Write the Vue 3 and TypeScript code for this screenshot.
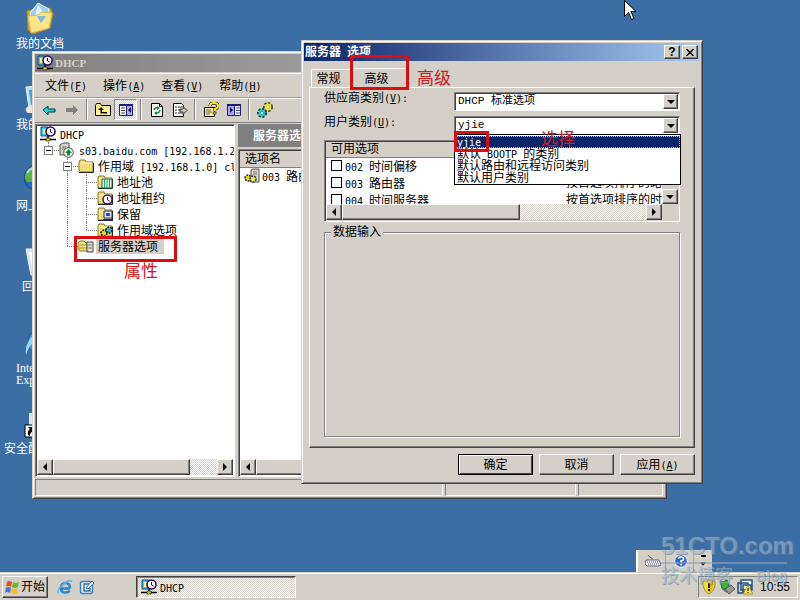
<script setup lang="ts">
import { h, ref } from 'vue'

/* Splits a label into full-width and half-width runs; "&" marks the access key. */
const Txt = (props: { t: string }) =>
  h(
    'span',
    { class: 'txt' },
    props.t.split(/([\x20-\x7e]+)/).filter(Boolean).map((part) => {
      if (!/^[\x20-\x7e]/.test(part)) return part
      const [head, tail] = part.split('&')
      return h('span', { class: 'hw' }, tail ? [head, h('u', tail[0]), tail.slice(1)] : part)
    }),
  )
Txt.props = ['t']

const shortcuts = [
  { icon: 'docs', label: '我的文档' },
  { icon: 'computer', label: '我的电脑' },
  { icon: 'globe', label: '网上邻居' },
  { icon: 'bin', label: '回收站' },
  { icon: 'ie', label: 'Internet Explorer' },
  { icon: 'shortcut', label: '安全配置向导' },
]
const menus = ['文件(&F)', '操作(&A)', '查看(&V)', '帮助(&H)']
const tools = [
  ['back', 'forward'],
  ['up', 'pane'],
  ['refresh', 'export'],
  ['help', 'pane2'],
  ['gears'],
]
const toolNames: Record<string, string> = {
  back: '后退', forward: '前进', up: '上移一级', pane: '显示树', refresh: '刷新',
  export: '导出', help: '帮助', pane2: '显示操作', gears: '配置选项',
}
/* Guide cells: v line, t branch, l last branch, x expander, e expander as last branch, blank */
const tree = [
  { guides: '', icon: 'dhcp', label: 'DHCP' },
  { guides: 'e', icon: 'server', label: 's03.baidu.com [192.168.1.2' },
  { guides: ' x', icon: 'folder', label: '作用域 [192.168.1.0] cl' },
  { guides: ' vt', icon: 'pool', label: '地址池' },
  { guides: ' vt', icon: 'lease', label: '地址租约' },
  { guides: ' vt', icon: 'reserve', label: '保留' },
  { guides: ' vl', icon: 'scopeopt', label: '作用域选项' },
  { guides: ' l', icon: 'srvopt', label: '服务器选项', selected: true },
]
const guideClass: Record<string, string> = { v: 'g-v', t: 'g-v g-h', l: 'g-l g-h', x: 'g-v g-h g-x', e: 'g-l g-h g-x', ' ': '' }
const options = ref([
  { name: '002 时间偏移', desc: '', on: false },
  { name: '003 路由器', desc: '按首选项排序的路', on: false },
  { name: '004 时间服务器', desc: '按首选项排序的时', on: false },
])
const classes = ['yjie', '默认 BOOTP 的类别', '默认路由和远程访问类别', '默认用户类别']
const vendor = ref('DHCP 标准选项')
const user = ref('yjie')
</script>

<template>
  <main class="desktop">
    <svg class="defs" aria-hidden="true">
      <symbol id="docs" viewBox="0 0 32 32">
        <path d="M3 9l8-2 3 2 12-3 3 6-3 14-17 6-5-4z" fill="#d9a62a" stroke="#b88820" />
        <path d="M14 1l11 6-2 15-13 3-4-14z" fill="#9fd0f6" stroke="#e9f5ff" />
        <path d="M14 3l6 8-9 3z" fill="#fff" opacity=".7" />
        <path d="M4 14l10-1 4-3 10 1-3 15-18 5z" fill="#fbe588" stroke="#e0bb45" />
        <path d="M13 14h9l-5 7z" fill="#7db8e8" />
      </symbol>
      <symbol id="computer" viewBox="0 0 32 32">
        <path d="M2 4l24-2v20l-21 3z" fill="#b7def8" stroke="#eaf6ff" />
        <path d="M5 7l18-2v14l-16 3z" fill="#4d9ddd" />
        <path d="M2 25q5-5 9 0l12-1v6H4q-3-2-2-5" fill="#e6e6e6" />
      </symbol>
      <symbol id="globe" viewBox="0 0 32 32">
        <circle cx="12" cy="14" r="12" fill="#2268c7" stroke="#17458c" />
        <path d="M2 9q6-7 14-6l-4 6-3 9-6 0q-4-5-1-9" fill="#58b53d" />
        <path d="M3 9q3-5 7-5" stroke="#fff" stroke-width="2" fill="none" opacity=".7" />
      </symbol>
      <symbol id="bin" viewBox="0 0 32 32">
        <path d="M2 4h27l-5 26H7z" fill="#cfe6f5" stroke="#f4fbff" />
        <path d="M5 7h5l2 20h-3z" fill="#fff" />
      </symbol>
      <symbol id="ie" viewBox="0 0 32 32">
        <path d="M16 4a12 12 0 1 0 11 17h-7q-4 4-8 0-2-2-2-3h18Q29 5 16 4m-6 10q2-5 6-5t5 5z" fill="#2e9be6" stroke="#0f5fae" />
        <path d="M2 29Q0 16 12 7t18-3Q20 5 12 13T2 29" fill="#9bd8ff" />
      </symbol>
      <symbol id="shortcut" viewBox="0 0 32 32">
        <path d="M5 6h20v18H5z" fill="#dce8f0" />
        <path d="M1 18h12v12H1z" fill="#fff" stroke="#000" />
        <path d="M4 28q-1-4 2-6l-2-2h7v7l-2-2q-3 0-3 4z" fill="#000" />
      </symbol>

      <symbol id="dhcp" viewBox="0 0 16 16">
        <path d="M1 1h7v9H1z" fill="#2cd6d6" stroke="#1a3a8c" />
        <path d="M3 3h3v5H3z" fill="#f4f28b" />
        <circle cx="10.500" cy="5.500" r="4.500" fill="#fff" stroke="#2a0c5c" stroke-width="1.600" />
        <path d="M10.500 3v3l2 1" stroke="#2a0c5c" fill="none" />
        <path d="M8 10v3M0 13.500h16" stroke="#000" stroke-width="1.400" />
        <path d="M6 12h4v3H6z" fill="#e8d020" stroke="#000" stroke-width=".6" />
      </symbol>
      <symbol id="server" viewBox="0 0 16 16">
        <path d="M1 3l3-2h6v12H1z" fill="#d8d4c8" stroke="#555" />
        <path d="M3 5h4M3 7h4" stroke="#777" />
        <circle cx="9.500" cy="10.500" r="4.800" fill="#fff" stroke="#444" />
        <path d="M9.500 7l3.500 4h-2v2.500h-3V11h-2z" fill="#128a34" />
      </symbol>
      <symbol id="folder" viewBox="0 0 16 16">
        <path d="M1 4l1-2h5l1 2h7v10H1z" fill="#f0df78" stroke="#8b7420" />
        <path d="M2 5h12" stroke="#fff8c8" />
        <path d="M1 14.500h14.500V5" stroke="#222" fill="none" />
      </symbol>
      <symbol id="pool" viewBox="0 0 16 16">
        <use href="#folder" />
        <path d="M5 5h10v9H5z" fill="#d8ffe8" stroke="#126a3a" />
        <path d="M7.500 5v9M10 5v9M12.500 5v9" stroke="#2c9a62" />
      </symbol>
      <symbol id="lease" viewBox="0 0 16 16">
        <use href="#folder" />
        <circle cx="10.500" cy="9.500" r="4.500" fill="#fff" stroke="#3d145f" stroke-width="1.500" />
        <path d="M10.500 7v3l2 1" stroke="#3d145f" fill="none" />
      </symbol>
      <symbol id="reserve" viewBox="0 0 16 16">
        <use href="#folder" />
        <path d="M7 5h8v7H7z" fill="#e4e4f4" stroke="#1a2870" />
        <path d="M9 7h4v3H9z" fill="#3048b8" />
        <path d="M6 14h10" stroke="#1a2870" stroke-width="2" />
      </symbol>
      <symbol id="scopeopt" viewBox="0 0 16 16">
        <use href="#folder" />
        <circle cx="7" cy="11" r="3" fill="#e4d030" stroke="#222" stroke-width="1.500" stroke-dasharray="2 1" />
        <circle cx="12" cy="8" r="3" fill="#36b8b8" stroke="#222" stroke-width="1.500" stroke-dasharray="2 1" />
      </symbol>
      <symbol id="srvopt" viewBox="0 0 16 16">
        <path d="M0 5l2-2h4l2 2h2v8H2l-2-3z" fill="#f0df78" stroke="#8b7420" />
        <path d="M1 7h8M1 10h8" stroke="#b49b38" />
        <path d="M9 4h6v10H9z" fill="#e4e0d4" stroke="#444" />
        <path d="M10 7h4M10 10h4" stroke="#777" />
      </symbol>
      <symbol id="optitem" viewBox="0 0 16 16">
        <path d="M7 2l2-1h6v13H7z" fill="#d8d4c8" stroke="#555" />
        <path d="M9 4h4M9 6h4" stroke="#777" />
        <circle cx="4" cy="10" r="3" fill="#e9d62c" stroke="#333" stroke-width="1.500" stroke-dasharray="2 1" />
        <circle cx="9" cy="11" r="3" fill="#f4e850" stroke="#333" stroke-width="1.500" stroke-dasharray="2 1" />
      </symbol>

      <symbol id="back" viewBox="0 0 16 16"><path d="M2 8l5-4v3h7v3H7v3z" fill="#22d0d0" stroke="#003c3c" /></symbol>
      <symbol id="forward" viewBox="0 0 16 16"><path d="M14 8L9 3v3H2v4h7v3z" fill="#808080" /><path d="M14.500 8.500l-5 5" stroke="#fff" /></symbol>
      <symbol id="up" viewBox="0 0 16 16">
        <path d="M.5 3.500l1-2h4l1 2h9v10H.5z" fill="#fff58a" stroke="#000" />
        <path d="M6 5l-3 3h2.500v3.500H12V10H7V8h2z" fill="#000" />
      </symbol>
      <symbol id="pane" viewBox="0 0 16 16">
        <path d="M1.500 2.500h13v11h-13z" fill="#fff" stroke="#1c1c7c" /><path d="M1 3h14" stroke="#1c1c7c" stroke-width="2" />
        <path d="M8.500 4v9" stroke="#1c1c7c" /><path d="M3 6h4M3 8.500h4M3 11h4" stroke="#444" /><path d="M9 4h5v9H9z" fill="#a8a8e4" /><path d="M13 5v6l-3-3z" fill="#10106c" />
      </symbol>
      <symbol id="pane2" viewBox="0 0 16 16">
        <path d="M1.500 2.500h13v11h-13z" fill="#fff" stroke="#1c1c7c" /><path d="M1 3h14" stroke="#1c1c7c" stroke-width="2" />
        <path d="M8.500 4v9" stroke="#1c1c7c" /><path d="M10 6h4M10 8.500h4M10 11h4" stroke="#3344bb" /><path d="M2 4h6v9H2z" fill="#a8a8e4" /><path d="M4 5v6l3-3z" fill="#10106c" />
      </symbol>
      <symbol id="refresh" viewBox="0 0 16 16">
        <path d="M2.500 1.500h8l3 3v10h-11z" fill="#fff" stroke="#000" /><path d="M10.500 1.500v3h3" fill="none" stroke="#000" />
        <path d="M5 8q1-3 4-2M11 8q-1 4-4 2.500" fill="none" stroke="#128a34" stroke-width="1.500" /><path d="M8 4l3 2-3 2zM8 9v4l-3-2z" fill="#128a34" />
      </symbol>
      <symbol id="export" viewBox="0 0 16 16">
        <path d="M1.500 1.500h8l2 2v11h-10z" fill="#fff" stroke="#000" /><path d="M3 5h2M6 5h4M3 8h2M6 8h3M3 11h2M6 11h4" stroke="#333" />
        <path d="M8 7h3V4.500l4 4-4 4V10H8z" fill="#c8c4b8" stroke="#333" />
      </symbol>
      <symbol id="help" viewBox="0 0 16 16">
        <path d="M1.500 5.500h10v9h-10z" fill="#fff3a0" stroke="#000" /><path d="M3 8h5M3 10h6M3 12h4" stroke="#555" />
        <path d="M7 4q0-3 4-3t4 3q0 2-3 3v2" fill="none" stroke="#000" stroke-width="3" /><path d="M7 4q0-3 4-3t4 3q0 2-3 3v2" fill="none" stroke="#ffe92c" stroke-width="2" />
        <path d="M10 10h3v2h-3z" fill="#ffe92c" stroke="#000" stroke-width=".6" />
      </symbol>
      <symbol id="gears" viewBox="0 0 16 16">
        <circle cx="5" cy="11" r="3.500" fill="#28b8b8" stroke="#063838" stroke-width="3" stroke-dasharray="2 1.200" />
        <circle cx="5" cy="11" r="2.600" fill="none" stroke="#28c8c8" stroke-width="1.600" />
        <circle cx="11" cy="5" r="3.500" fill="#e6d430" stroke="#403a08" stroke-width="3" stroke-dasharray="2 1.200" />
        <circle cx="11" cy="5" r="2.600" fill="none" stroke="#f2e440" stroke-width="1.600" />
        <circle cx="5" cy="11" r="1" fill="#fff" /><circle cx="11" cy="5" r="1" fill="#fff" />
      </symbol>

      <symbol id="flag" viewBox="0 0 16 16">
        <path d="M3 3q2-2 5 0L7 8Q4 6 2 8z" fill="#e8502c" /><path d="M9 3q3 2 6 0l-1 5q-3 2-6 0z" fill="#6cb42c" />
        <path d="M2 9q2-2 5 0l-1 5q-3-2-5 0z" fill="#3c78dc" /><path d="M8 9q3 2 6 0l-1 5q-3 2-6 0z" fill="#f4c020" />
      </symbol>
      <symbol id="browser" viewBox="0 0 16 16">
        <path d="M13 9.500H5M13 9.500Q13 4 8.500 4T4 9t4.500 4.500q3 0 4-2" fill="none" stroke="#2c86d0" stroke-width="2.600" />
        <path d="M1.500 14.500Q-.5 11 6 5.500T15 2.500" fill="none" stroke="#58b4ee" stroke-width="1.400" />
      </symbol>
      <symbol id="showdesk" viewBox="0 0 16 16">
        <rect x="1.500" y="2.500" width="12" height="12" rx="2" fill="#dcecf8" stroke="#3c80b8" stroke-width="1.500" />
        <path d="M10 5H5v7h6V9" fill="none" stroke="#3574ac" stroke-width="1.400" /><path d="M7 9l6-7 2 2-6 6z" fill="#fff" stroke="#2b689e" />
      </symbol>
      <symbol id="shield" viewBox="0 0 16 16">
        <path d="M8 1q3 2 6 1 1 9-6 13Q1 11 2 2q3 1 6-1" fill="#f8dc30" stroke="#a58a38" /><path d="M8 2q3 2 5 1 0 7-5 11z" fill="#e4b818" />
        <path d="M7 4h2v5H7zM7 10h2v2H7z" fill="#222" />
      </symbol>
      <symbol id="plug" viewBox="0 0 16 16">
        <path d="M6 10l6-4 4 4-6 5z" fill="#999" stroke="#555" /><path d="M1 2l3 1 4-2 2 5-3 4-4-1z" fill="#38b838" stroke="#187818" /><path d="M3 9l5 4" stroke="#666" stroke-width="2" />
      </symbol>
      <symbol id="vm" viewBox="0 0 16 16">
        <path d="M4 1h11v10H4z" fill="#fff" stroke="#205080" stroke-width="1.500" /><path d="M1 4h10v10H1zM6 6h8v7H6z" fill="none" stroke="#205080" stroke-width="1.500" />
        <path d="M11 6l5 9H6z" fill="#ffe830" stroke="#a08000" stroke-width=".7" /><path d="M10.500 9h1v3h-1zM10.500 13h1v1h-1z" fill="#000" />
      </symbol>
      <symbol id="keyboard" viewBox="0 0 16 16">
        <path d="M1 7h13l2 5-2 1H2l-2-2z" fill="#f0f0fa" stroke="#667" /><path d="M2 9h12M3 11h11" stroke="#446" stroke-dasharray="1 1" /><path d="M8 6q-4-2-5-4" stroke="#555" fill="none" />
      </symbol>
      <symbol id="qmark" viewBox="0 0 16 16">
        <circle cx="8" cy="8" r="6.500" fill="#2c68cc" stroke="#dbe6f8" stroke-width="1.400" />
        <path d="M5.500 6q0-2 2.500-2t2.500 2q0 1.500-2.500 2v1.500M8 11v1.500" fill="none" stroke="#fff" stroke-width="1.600" />
      </symbol>
      <symbol id="tri-l" viewBox="0 0 8 8"><path d="M6 0v8L2 4z" /></symbol>
      <symbol id="tri-r" viewBox="0 0 8 8"><path d="M2 0v8l4-4z" /></symbol>
      <symbol id="tri-d" viewBox="0 0 8 8"><path d="M0 2h8L4 6z" /></symbol>
    </svg>

    <nav class="shortcuts">
      <a v-for="s in shortcuts" :key="s.icon" href="#">
        <svg><use :href="'#' + s.icon" /></svg>
        <span>{{ s.label }}</span>
      </a>
    </nav>

    <section class="window console">
      <header class="titlebar inactive">
        <svg class="i16"><use href="#dhcp" /></svg>
        <h1>DHCP</h1>
      </header>
      <nav class="menubar">
        <button v-for="m in menus" :key="m" type="button"><Txt :t="m" /></button>
      </nav>
      <div class="toolbar">
        <div v-for="(group, i) in tools" :key="i" class="group">
          <button v-for="t in group" :key="t" type="button" :class="{ pressed: t === 'pane' }" :aria-label="toolNames[t]">
            <svg class="i16"><use :href="'#' + t" /></svg>
          </button>
        </div>
      </div>
      <div class="panes">
        <div class="pane">
          <ul class="tree">
            <li v-for="n in tree" :key="n.label">
              <i v-for="(g, i) in n.guides" :key="i" class="guide" :class="guideClass[g]"><b v-if="'xe'.includes(g)"></b></i>
              <svg class="i16"><use :href="'#' + n.icon" /></svg>
              <span class="node" :class="{ selected: n.selected }"><Txt :t="n.label" /></span>
            </li>
          </ul>
          <div class="scroll">
            <button type="button" aria-label="向左"><svg><use href="#tri-l" /></svg></button>
            <span class="thumb"></span><span class="track"></span>
            <button type="button" aria-label="向右"><svg><use href="#tri-r" /></svg></button>
          </div>
        </div>
        <div class="detail">
          <h2 class="banner">服务器选项</h2>
          <div class="pane">
            <div class="colhead">选项名</div>
            <div class="item"><svg class="i16"><use href="#optitem" /></svg><Txt t="003 路由器" /></div>
            <div class="grow"></div>
            <div class="scroll">
              <button type="button" aria-label="向左"><svg><use href="#tri-l" /></svg></button>
              <span class="thumb wide"></span>
            </div>
          </div>
        </div>
      </div>
      <footer class="status"><span></span><span></span><span></span></footer>
    </section>

    <section class="window dialog" role="dialog">
      <header class="titlebar">
        <h1><Txt t="服务器 选项" /></h1>
        <button class="cap" type="button" aria-label="帮助">?</button>
        <button class="cap" type="button" aria-label="关闭">
          <svg viewBox="0 0 8 8"><path d="M0 0l8 8M8 0L0 8" stroke="#000" stroke-width="1.600" /></svg>
        </button>
      </header>
      <div class="tabs" role="tablist">
        <button type="button" role="tab">常规</button>
        <button type="button" role="tab" class="current" aria-selected="true">高级</button>
      </div>
      <div class="sheet">
        <div class="field">
          <label for="vendor"><Txt t="供应商类别(&V):" /></label>
          <div class="combo">
            <select id="vendor" v-model="vendor"><option>DHCP 标准选项</option></select>
            <span class="drop"><svg><use href="#tri-d" /></svg></span>
          </div>
        </div>
        <div class="field">
          <label for="user"><Txt t="用户类别(&U):" /></label>
          <div class="combo">
            <select id="user" v-model="user"><option v-for="c in classes" :key="c">{{ c }}</option></select>
            <span class="drop"><svg><use href="#tri-d" /></svg></span>
            <ul class="popup">
              <li v-for="c in classes" :key="c" :class="{ active: c === user }" @click="user = c"><Txt :t="c" /></li>
            </ul>
          </div>
        </div>
        <div class="options">
          <div class="viewport">
            <table>
              <thead><tr><th>可用选项</th><th></th></tr></thead>
              <tbody>
                <tr v-for="o in options" :key="o.name">
                  <td><label><input v-model="o.on" type="checkbox" /><Txt :t="o.name" /></label></td>
                  <td>{{ o.desc }}</td>
                </tr>
              </tbody>
            </table>
            <div class="vscroll"><button type="button" aria-label="向下"><svg><use href="#tri-d" /></svg></button></div>
          </div>
          <div class="scroll">
            <button type="button" aria-label="向左"><svg><use href="#tri-l" /></svg></button>
            <span class="thumb"></span><span class="track"></span>
            <button type="button" aria-label="向右"><svg><use href="#tri-r" /></svg></button>
            <span class="corner"></span>
          </div>
        </div>
        <fieldset><legend>数据输入</legend></fieldset>
      </div>
      <footer class="actions">
        <button type="button" class="default">确定</button>
        <button type="button">取消</button>
        <button type="button"><Txt t="应用(&A)" /></button>
      </footer>
    </section>

    <div class="mark box-tab"></div>
    <div class="mark box-item"></div>
    <div class="mark box-node"></div>
    <p class="note note-tab">高级</p>
    <p class="note note-item">选择</p>
    <p class="note note-node">属性</p>

    <div class="langbar">
      <button type="button" aria-label="键盘"><svg class="i16"><use href="#keyboard" /></svg></button>
      <button type="button" aria-label="语言帮助"><svg class="i16"><use href="#qmark" /></svg></button>
      <span class="langend"><i></i><svg><use href="#tri-d" /></svg></span>
    </div>

    <footer class="taskbar">
      <button type="button" class="start"><svg class="i16"><use href="#flag" /></svg>开始</button>
      <div class="quick">
        <a href="#" aria-label="浏览器"><svg class="i16"><use href="#browser" /></svg></a>
        <a href="#" aria-label="显示桌面"><svg class="i16"><use href="#showdesk" /></svg></a>
      </div>
      <button type="button" class="task"><svg class="i16"><use href="#dhcp" /></svg><Txt t="DHCP" /></button>
      <div class="tray">
        <svg class="i16"><use href="#shield" /></svg>
        <svg class="i16"><use href="#plug" /></svg>
        <svg class="i16"><use href="#vm" /></svg>
        <time>10:55</time>
      </div>
    </footer>

    <div class="watermark"><strong>51CTO.com</strong><div><span>技术博客</span><span class="blog">Blog</span></div></div>
    <svg class="cursor" viewBox="0 0 12 21"><path d="M.5.5v16l4-4 3 7 2.500-1-3-7h5z" fill="#fff" stroke="#000" /></svg>
  </main>
</template>

<style>
body { margin: 0; }
.txt { display: inline-block; padding-top: 2px; line-height: 14px; white-space: pre; }
.txt .hw { font-family: "DejaVu Sans Mono", monospace; font-size: 10px; line-height: 12px; }
</style>

<style scoped>
* { box-sizing: border-box; }
.desktop {
  position: relative; height: 100vh; overflow: hidden; background: #3a6ea5; color: #000;
  font: 12px/16px "Liberation Sans", "Noto Sans CJK SC", sans-serif;
}
.defs { position: absolute; width: 0; height: 0; }
button, select { font: inherit; color: inherit; border: 0; padding: 0; margin: 0; background: #d4d0c8; }
h1, h2, p, ul { margin: 0; padding: 0; font-size: 12px; list-style: none; }
.i16 { width: 16px; height: 16px; flex: none; }

.shortcuts { width: 80px; display: flex; flex-direction: column; }
.shortcuts a {
  height: 81px; padding-top: 2px; display: flex; flex-direction: column; align-items: center; gap: 4px;
  color: #fff; text-decoration: none; text-align: center; line-height: 12px; white-space: nowrap;
}
.shortcuts a svg { width: 32px; height: 32px; flex: none; }
.shortcuts a:nth-child(5) { line-height: 12px; }
.shortcuts a:nth-child(5) span { white-space: normal; font-family: "Liberation Serif", serif; width: 52px; text-align: left; padding-left: 2px; }

.window {
  position: absolute; background: #d4d0c8; display: flex; flex-direction: column; padding: 2px;
  border: 1px solid; border-color: #d4d0c8 #404040 #404040 #d4d0c8;
  box-shadow: inset 1px 1px #fff, inset -1px -1px #808080;
}
.titlebar {
  height: 18px; flex: none; display: flex; align-items: center; gap: 2px; padding: 0 2px; color: #fff;
  background: linear-gradient(90deg, #0a246a, #a6caf0);
}
.titlebar h1 { flex: 1; font-weight: 700; line-height: 18px; }
.titlebar.inactive { background: linear-gradient(90deg, #808080, #c0c0c0); color: #d4d0c8; }
.inactive h1 { font-family: "Liberation Serif", serif; font-size: 11px; }

.console { left: 32px; top: 51px; width: 635px; height: 448px; }
.menubar { height: 25px; flex: none; margin-top: 1px; border-top: 1px solid #fff; border-bottom: 1px solid #a09c94; display: flex; padding-left: 2px; }
.menubar button { padding: 0 8px; }
.toolbar { height: 25px; flex: none; display: flex; align-items: center; border-top: 1px solid #fff; border-bottom: 1px solid #808080; padding: 0 0 2px 2px; }
.group { display: flex; }
.group + .group { padding-left: 8px; background: linear-gradient(90deg, transparent 3px, #808080 3px 4px, #fff 4px 5px, transparent 5px); }
.toolbar button { width: 23px; height: 21px; display: grid; place-items: center; background: none; }
.toolbar .pressed {
  border: 1px solid; border-color: #808080 #fff #fff #808080;
  background: repeating-conic-gradient(#fff 0 25%, #d4d0c8 0 50%) 0 0 / 2px 2px;
}
.panes { flex: 1; min-height: 0; display: grid; grid-template-columns: 200px 1fr; gap: 3px; padding-top: 1px; }
.pane {
  background: #fff; display: flex; flex-direction: column; min-width: 0; overflow: hidden;
  border: 1px solid; border-color: #808080 #fff #fff #808080; box-shadow: inset 1px 1px #404040; padding: 1px;
}
.tree { flex: 1; padding-left: 3px; }
.tree li { height: 16px; display: flex; align-items: center; }
.guide { position: relative; width: 19px; height: 16px; flex: none; }
.g-v::before, .g-l::before { content: ""; position: absolute; left: 8px; top: 0; bottom: 0; border-left: 1px dotted #808080; }
.g-l::before { bottom: 8px; }
.g-h::after { content: ""; position: absolute; left: 8px; right: 0; top: 8px; border-top: 1px dotted #808080; }
.guide b { position: absolute; z-index: 1; left: 4px; top: 4px; width: 9px; height: 9px; border: 1px solid #808080; background: linear-gradient(#000, #000) center / 5px 1px no-repeat #fff; }
.node { margin-left: 2px; padding: 0 6px 0 2px; height: 16px; white-space: nowrap; }
.selected { background: #d4d0c8; }

.scroll { height: 16px; flex: none; display: flex; background: #d4d0c8; }
.scroll button, .scroll .thumb, .vscroll button, .drop, .cap {
  background: #d4d0c8; border: 1px solid; border-color: #fff #404040 #404040 #fff; box-shadow: inset -1px -1px #808080;
}
.scroll button { width: 16px; display: grid; place-items: center; flex: none; }
.scroll svg, .drop svg, .vscroll svg { width: 8px; height: 8px; }
.thumb { flex: 138; }
.track { flex: 27; background: repeating-conic-gradient(#fff 0 25%, #d4d0c8 0 50%) 0 0 / 2px 2px; }
.detail { display: flex; flex-direction: column; min-width: 0; }
.banner { background: #808080; color: #fff; height: 23px; line-height: 24px; padding-left: 15px; margin-bottom: 2px; flex: none; }
.detail .pane { flex: 1; }
.colhead { background: #d4d0c8; padding-left: 5px; line-height: 16px; border-bottom: 1px solid #808080; flex: none; }
.item { display: flex; align-items: center; gap: 2px; padding: 0 4px; }
.grow { flex: 1; }
.status { height: 19px; flex: none; display: grid; grid-template-columns: 410fr 132fr 85fr; gap: 2px; padding: 2px 1px 0 0; }
.status span { border: 1px solid; border-color: #808080 #fff #fff #808080; }

.dialog { left: 301px; top: 40px; width: 402px; height: 444px; }
.dialog .titlebar { padding: 0 2px 0 1px; }
.cap { width: 16px; height: 14px; color: #000; font-weight: 700; line-height: 12px; display: grid; place-items: center; }
.cap svg { width: 8px; height: 7px; }
.tabs { height: 26px; flex: none; display: flex; align-items: flex-end; padding-left: 7px; }
.tabs button { width: 41px; height: 18px; border: 1px solid; border-color: #fff #404040 transparent #fff; border-bottom: 0; border-radius: 2px 2px 0 0; padding-right: 6px; }
.tabs .current { width: 55px; height: 20px; margin-bottom: -1px; position: relative; }
.sheet {
  flex: 1; margin: 0 5px 6px 5px; padding: 4px 14px 10px; display: flex; flex-direction: column;
  border: 1px solid; border-color: #fff #404040 #404040 #fff; box-shadow: inset -1px -1px #808080;
}
.field { display: grid; grid-template-columns: 130px 1fr; height: 24px; }
.field label { line-height: 12px; }
.field label .txt { padding-top: 0; line-height: 12px; }
.combo { position: relative; height: 19px; display: flex; background: #fff; border: 1px solid; border-color: #808080 #fff #fff #808080; box-shadow: inset 1px 1px #404040; padding: 1px; }
.combo select { flex: 1; min-width: 0; appearance: none; background: #fff; padding-left: 2px; font: 11px/15px "Liberation Mono", "Noto Sans CJK SC", monospace; outline: 0; }
.drop { width: 15px; display: grid; place-items: center; }
.popup { position: absolute; z-index: 2; left: -1px; right: -2px; top: 17px; border: 1px solid #000; background: #fff; padding: 1px 0 0; }
.popup li { height: 12px; line-height: 12px; padding: 0 2px; white-space: nowrap; }
.popup .txt { padding-top: 0; line-height: 12px; }
.popup .active { background: #0a246a; color: #fff; outline: 1px dotted #c8b878; outline-offset: -1px; }
.options { border: 1px solid; border-color: #808080 #fff #fff #808080; box-shadow: inset 1px 1px #404040; padding: 1px; }
.viewport { height: 62px; overflow: hidden; display: flex; align-items: stretch; background: #fff; }
table { flex: 1; align-self: flex-start; border-collapse: collapse; table-layout: fixed; }
th { width: 241px; height: 15px; padding: 0 5px; text-align: left; font-weight: 400; line-height: 14px; background: #d4d0c8; border-bottom: 1px solid #808080; }
td { height: 17px; line-height: 16px; padding: 0 0 0 5px; white-space: nowrap; vertical-align: middle; }
td + td { padding-left: 2px; }
th + th { width: auto; }
td label { display: flex; align-items: center; gap: 3px; }
input[type="checkbox"] { appearance: none; width: 11px; height: 11px; margin: 0; border: 1px solid #000; background: #fff; }
.vscroll { width: 16px; flex: none; display: flex; align-items: flex-end; background: #d4d0c8; }
.vscroll button { width: 16px; height: 15px; display: grid; place-items: center; }
.options .thumb { flex: 178; }
.options .track { flex: 127; }
.corner { width: 16px; }
fieldset { flex: 1; margin: 2px 0 0; padding: 0; border: 1px solid #808080; box-shadow: 1px 1px #fff, inset 1px 1px #fff; min-width: 0; }
legend { margin-left: 6px; padding: 0 2px; background: #d4d0c8; }
.actions { display: flex; justify-content: flex-end; gap: 6px; padding: 0 5px 6px; }
.actions button { width: 75px; height: 21px; border: 1px solid; border-color: #fff #404040 #404040 #fff; box-shadow: inset -1px -1px #808080; }
.actions .default { border-color: #000; box-shadow: inset 1px 1px #fff, inset -1px -1px #404040; }

.mark { position: absolute; z-index: 3; border: 3px solid #dc0c10; pointer-events: none; }
.box-tab { left: 350px; top: 55px; width: 59px; height: 35px; }
.box-item { left: 454px; top: 131px; width: 35px; height: 21px; }
.box-node { left: 74px; top: 236px; width: 103px; height: 26px; }
.note { position: absolute; z-index: 3; color: #cc2020; font-size: 17px; line-height: 20px; pointer-events: none; }
.note-tab { left: 417px; top: 69px; }
.note-item { left: 541px; top: 130px; }
.note-node { left: 124px; top: 262px; }

.langbar { position: absolute; left: 636px; bottom: 28px; height: 22px; width: 76px; display: flex; background: #d4d0c8; border-left: 2px solid #fff; }
.langbar button { width: 28px; padding-left: 2px; display: grid; place-items: center; border-right: 1px solid #a8a49c; }
.langend { flex: 1; display: flex; flex-direction: column; align-items: center; justify-content: center; gap: 4px; }
.langend i { width: 5px; height: 2px; background: #000; }
.langend svg { width: 6px; height: 6px; }
.taskbar {
  position: absolute; left: 0; right: 0; bottom: 0; height: 28px; background: #d4d0c8; border-top: 1px solid #d4d0c8; box-shadow: inset 0 1px #fff;
  display: flex; align-items: center; padding: 3px 2px 2px;
}
.start { width: 46px; height: 22px; display: flex; align-items: center; gap: 1px; padding-left: 1px; border: 1px solid; border-color: #fff #404040 #404040 #fff; box-shadow: inset -1px -1px #808080; }
.quick { width: 88px; padding-left: 9px; display: flex; gap: 6px; }
.quick a { height: 16px; }
.task {
  width: 160px; height: 22px; display: flex; align-items: center; gap: 3px; padding-left: 4px;
  border: 1px solid; border-color: #404040 #fff #fff #404040; box-shadow: inset 1px 1px #808080;
  background: repeating-conic-gradient(#fff 0 25%, #d4d0c8 0 50%) 0 0 / 2px 2px;
}
.tray { margin-left: auto; width: 100px; height: 22px; display: flex; align-items: center; gap: 2px; padding: 0 2px; border: 1px solid; border-color: #808080 #fff #fff #808080; }
.tray time { padding-left: 5px; }
.watermark { position: absolute; left: 661px; top: 530px; width: 126px; color: #9fb4c8; opacity: .6; pointer-events: none; text-shadow: 1px 1px #6d8094; }
.watermark strong { display: block; font: 700 24px/32px "Liberation Sans", sans-serif; border-bottom: 2px solid #8fa6bc; }
.watermark div { display: flex; justify-content: space-between; align-items: center; font-size: 18px; line-height: 24px; }
.watermark .blog { font-size: 14px; font-weight: 700; line-height: 16px; }
.cursor { position: absolute; left: 624px; top: 0; width: 12px; height: 21px; }
</style>
